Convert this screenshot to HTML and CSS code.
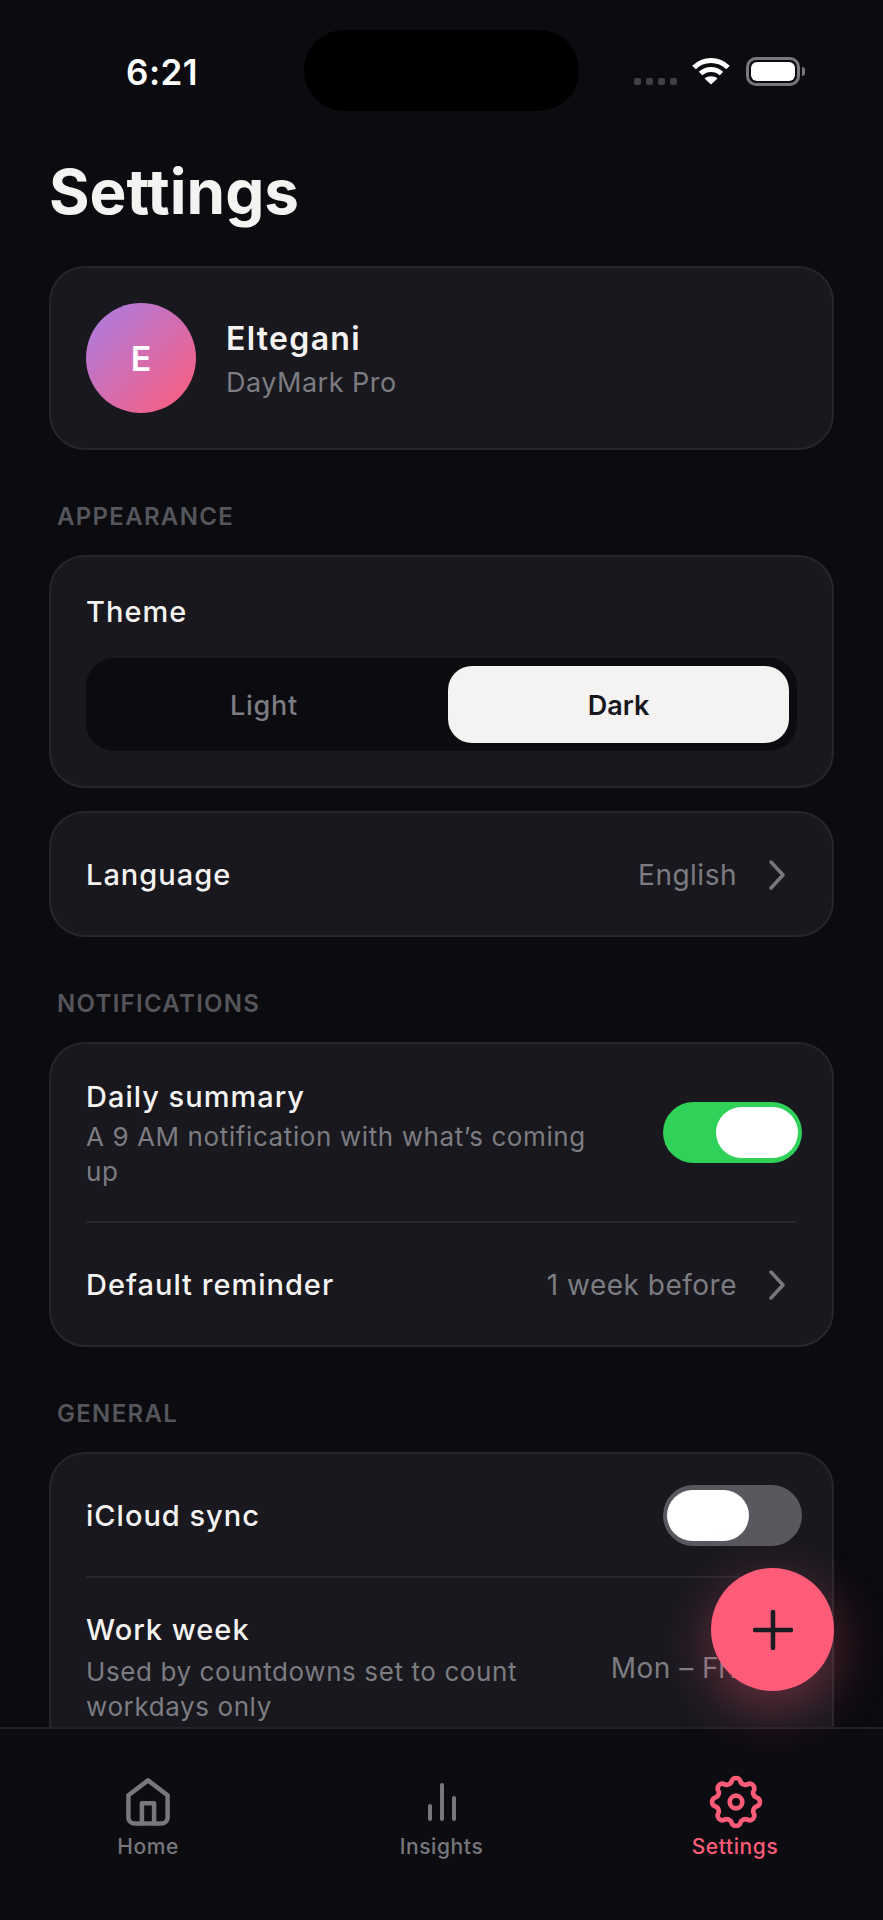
FILE: index.html

```html
<!DOCTYPE html>
<html lang="en">
<head>
  <meta charset="UTF-8">
  <title>Settings</title>
  <link rel="stylesheet" href="styles.css">
</head>
<body>
<div class="screen">

  <div class="status">
    <span class="time">6:21</span>
    <div class="island"></div>
    <div class="status-icons">
      <div class="signal"><i></i><i></i><i></i><i></i></div>
      <svg class="wifi" width="38" height="28" viewBox="0 0 38 28" fill="none" stroke="#fff" stroke-width="5">
        <path d="M2 10.5C11.5 1 26.500 1 36 10.500"/>
        <path d="M8.500 16.500C14.500 11 23.500 11 29.500 16.500"/>
        <path d="M19 27.500L12.500 21.500C16 18.500 22 18.500 25.500 21.500Z" fill="#fff" stroke="none"/>
      </svg>
      <div class="battery"><div class="battery-fill"></div></div>
      <div class="battery-nub"></div>
    </div>
  </div>

  <main class="content">
    <h1>Settings</h1>

    <section class="card">
      <div class="profile">
        <div class="avatar">E</div>
        <div>
          <div class="name">Eltegani</div>
          <div class="plan">DayMark Pro</div>
        </div>
      </div>
    </section>

    <div class="label">APPEARANCE</div>
    <section class="card theme">
      <div class="title">Theme</div>
      <div class="segment">
        <div class="seg-item">Light</div>
        <div class="seg-item active">Dark</div>
      </div>
    </section>

    <section class="card next">
      <div class="row">
        <div class="title">Language</div>
        <div class="value">English
          <svg class="chevron" width="16" height="30" viewBox="0 0 16 30"><path d="M2 2L14 15L2 28"/></svg>
        </div>
      </div>
    </section>

    <div class="label">NOTIFICATIONS</div>
    <section class="card">
      <div class="row tall">
        <div class="text">
          <div class="title">Daily summary</div>
          <div class="sub">A 9 AM notification with what’s coming up</div>
        </div>
        <div class="toggle on"><div class="knob"></div></div>
      </div>
      <div class="divider"></div>
      <div class="row">
        <div class="title">Default reminder</div>
        <div class="value">1 week before
          <svg class="chevron" width="16" height="30" viewBox="0 0 16 30"><path d="M2 2L14 15L2 28"/></svg>
        </div>
      </div>
    </section>

    <div class="label">GENERAL</div>
    <section class="card">
      <div class="row">
        <div class="title">iCloud sync</div>
        <div class="toggle"><div class="knob"></div></div>
      </div>
      <div class="divider"></div>
      <div class="row tall work">
        <div class="text">
          <div class="title">Work week</div>
          <div class="sub">Used by countdowns set to count workdays only</div>
        </div>
        <div class="value">Mon – Fri
          <svg class="chevron" width="16" height="30" viewBox="0 0 16 30"><path d="M2 2L14 15L2 28"/></svg>
        </div>
      </div>
    </section>
  </main>

  <nav class="tabs">
    <div class="tab">
      <svg width="54" height="54" viewBox="0 0 24 24" fill="none" stroke="currentColor" stroke-width="2" stroke-linejoin="round" stroke-linecap="round">
        <path d="M12 2.400L20.700 9V19A2.500 2.500 0 0 1 18.200 21.500H5.800A2.500 2.500 0 0 1 3.300 19V9Z"/>
        <path d="M9.300 21.500V12.500H14.700V21.500"/>
      </svg>
      <span>Home</span>
    </div>
    <div class="tab">
      <svg width="54" height="54" viewBox="0 0 54 54" fill="currentColor">
        <rect x="13" y="29" width="4" height="17" rx="2"/>
        <rect x="25" y="8" width="4" height="38" rx="2"/>
        <rect x="37" y="21" width="4" height="25" rx="2"/>
      </svg>
      <span>Insights</span>
    </div>
    <div class="tab active">
      <svg class="gear" width="56" height="56" viewBox="0 0 24 24" fill="none" stroke="currentColor" stroke-width="2" stroke-linejoin="round">
        <path d="M10.190 2.880A2 2 0 0 1 13.810 2.880A2.200 2.200 0 0 0 17.170 4.270A2 2 0 0 1 19.730 6.830A2.200 2.200 0 0 0 21.120 10.190A2 2 0 0 1 21.120 13.810A2.200 2.200 0 0 0 19.730 17.170A2 2 0 0 1 17.170 19.730A2.200 2.200 0 0 0 13.810 21.120A2 2 0 0 1 10.190 21.120A2.200 2.200 0 0 0 6.830 19.730A2 2 0 0 1 4.270 17.170A2.200 2.200 0 0 0 2.880 13.810A2 2 0 0 1 2.880 10.190A2.200 2.200 0 0 0 4.270 6.830A2 2 0 0 1 6.830 4.270A2.200 2.200 0 0 0 10.190 2.880Z"/>
        <circle cx="12" cy="12" r="2.700"/>
      </svg>
      <span>Settings</span>
    </div>
  </nav>

  <div class="fab">
    <svg width="40" height="40" viewBox="0 0 40 40" stroke="#1a1a22" stroke-width="4.500" stroke-linecap="round"><path d="M20 2V38M2 20H38"/></svg>
  </div>

</div>
</body>
</html>
```

FILE: styles.css

```css
* { box-sizing: border-box; }
body { margin: 0; background: #0b0b10; font-family: Inter, "Liberation Sans", sans-serif; color: #f4f3f1; }

.screen { position: relative; width: 883px; height: 1920px; overflow: hidden; display: flex; flex-direction: column; background: #0b0b10; }

/* status bar */
.status { flex: none; height: 152px; position: relative; display: flex; justify-content: space-between; align-items: flex-start; padding: 52px 78px 0 126px; }
.time { font-size: 35px; line-height: 40px; font-weight: 600; letter-spacing: 0.5px; color: #fff; }
.island { position: absolute; left: 304px; top: 30px; width: 275px; height: 81px; border-radius: 40px; background: #000; }
.status-icons { display: flex; align-items: flex-start; margin-top: 5px; }
.signal { display: flex; gap: 5px; margin: 21px 15px 0 0; }
.signal i { width: 7px; height: 7px; border-radius: 2px; background: #3f3f45; }
.wifi { margin-right: 16px; }
.battery { width: 54px; height: 29px; border: 3px solid #77777c; border-radius: 10px; padding: 2px; }
.battery-fill { height: 100%; background: #fff; border-radius: 6px; }
.battery-nub { width: 3px; height: 9px; margin: 10px 0 0 2px; background: #77777c; border-radius: 0 3px 3px 0; }

/* page */
.content { flex: 1; min-height: 0; overflow: hidden; padding: 0 49px; }
h1 { margin: 2px 0 36px; font-size: 62px; line-height: 76px; font-weight: 700; color: #f4f3f1; }

.card { background: #18181e; border: 2px solid #26262c; border-radius: 36px; }
.next { margin-top: 23px; }
.label { margin: 52px 0 23px 8px; font-size: 24px; line-height: 30px; font-weight: 600; letter-spacing: 1.300px; color: #55555c; }

.profile { display: flex; align-items: center; gap: 30px; padding: 35px 35px; }
.avatar { width: 110px; height: 110px; border-radius: 50%; display: flex; align-items: center; justify-content: center; background: linear-gradient(135deg, #a77ee6, #ff5c7a); color: #fff; font-size: 34px; font-weight: 600; }
.name { margin-top: 3px; font-size: 32px; line-height: 40px; font-weight: 600; letter-spacing: 1.300px; color: #f4f3f1; }
.plan { margin-top: 7px; font-size: 27px; line-height: 34px; letter-spacing: 0.5px; color: #7c7c82; }

.title { padding-top: 2px; font-size: 29px; line-height: 36px; font-weight: 500; letter-spacing: 1px; color: #f4f3f1; }
.sub { margin-top: 4px; font-size: 26px; line-height: 35px; letter-spacing: 0.6px; color: #7c7c82; }
.value { display: flex; align-items: center; gap: 32px; padding-top: 1px; font-size: 28px; letter-spacing: 0.5px; color: #7c7c82; white-space: nowrap; }
.chevron { fill: none; stroke: #77777d; stroke-width: 3.500; stroke-linecap: round; stroke-linejoin: round; margin-right: 17px; }

.theme { padding: 35px 35px; }
.segment { margin-top: 28px; height: 93px; padding: 8px 8px 8px 0; display: flex; gap: 6px; background: #0b0b10; border-radius: 28px; }
.seg-item { flex: 1; display: flex; align-items: center; justify-content: center; padding-top: 2px; font-size: 27px; font-weight: 500; letter-spacing: 0.8px; color: #7c7c82; border-radius: 24px; }
.seg-item.active { flex: none; width: 341px; background: #f4f3f1; color: #18181f; font-weight: 600; letter-spacing: 0; }

.row { min-height: 122px; padding: 0 30px 0 35px; display: flex; align-items: center; justify-content: space-between; }
.tall { padding-top: 30px; padding-bottom: 30px; }
.text { width: 510px; padding-top: 3px; margin-bottom: 2px; }
.work .text { padding-top: 2px; }
.work .sub { margin-top: 6px; }
.divider { height: 2px; margin: 0 35px; background: #26262c; }

.toggle { width: 139px; height: 61px; padding: 5px 4px; display: flex; border-radius: 31px; background: #58585e; }
.toggle.on { justify-content: flex-end; background: #30d158; }
.knob { width: 82px; height: 51px; border-radius: 26px; background: #fff; }

/* tab bar */
.tabs { flex: none; height: 193px; position: relative; display: flex; justify-content: space-between; padding: 46px 88px 0; background: #0c0c11; border-top: 2px solid #202026; }
.tab { width: 120px; height: 110px; display: flex; flex-direction: column; align-items: center; color: #77777d; font-size: 21px; line-height: 26px; font-weight: 500; letter-spacing: 0.6px; }
.tab span { margin-top: 5px; }
.tab .gear { margin: -1px 0 0 2px; }
.tab.active span { margin-top: 4px; }
.tab.active { color: #ff5c7a; }

.fab { position: absolute; left: 711px; top: 1568px; width: 123px; height: 123px; border-radius: 50%; display: flex; align-items: center; justify-content: center; background: #ff5c7a; box-shadow: 0 16px 56px rgba(255, 92, 122, 0.38); }
```
